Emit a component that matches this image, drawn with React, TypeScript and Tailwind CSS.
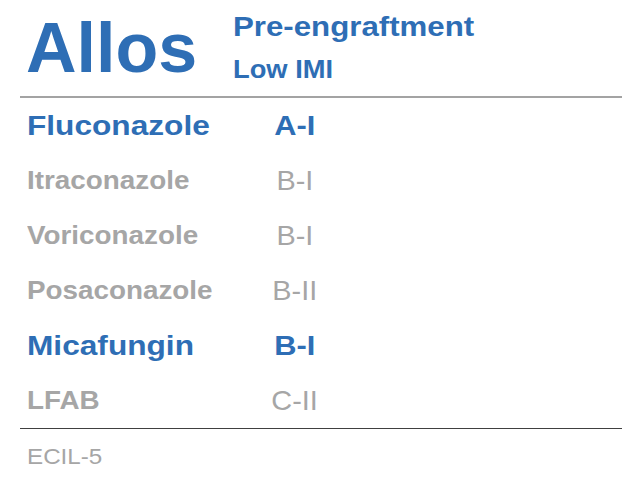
const rows = [
  { name: 'Fluconazole', grade: 'A-I', hl: true },
  { name: 'Itraconazole', grade: 'B-I', hl: false },
  { name: 'Voriconazole', grade: 'B-I', hl: false },
  { name: 'Posaconazole', grade: 'B-II', hl: false },
  { name: 'Micafungin', grade: 'B-I', hl: true },
  { name: 'LFAB', grade: 'C-II', hl: false },
];

export default function App() {
  return (
    <div className="w-[640px] h-[480px] bg-white overflow-hidden font-['Liberation_Sans',Arial,sans-serif]">
      <div className="h-[96px] flex items-start pt-[10px] pl-[26px]">
        <div className="mt-[3px] text-[70px] leading-[70px] font-bold text-[#2e6eb5] w-[207px]">Allos</div>
        <div className="font-bold text-[#2e6eb5]">
          <div className="text-[28px] leading-[34px]">
            <span className="inline-block origin-left scale-x-[1.115]">Pre-engraftment</span>
          </div>
          <div className="mt-[8px] text-[26px] leading-[34px]">
            <span className="inline-block origin-left scale-x-[1.05]">Low IMI</span>
          </div>
        </div>
      </div>
      <div className="ml-[20px] mr-[18px] h-[2px] bg-[#a3a3a3]" />

      <div className="pl-[27px]">
        {rows.map((r) => (
          <div key={r.name} className="flex h-[55px] items-center leading-none">
            <div className="w-[228px] flex">
              <span
                className={
                  r.hl
                    ? 'block origin-left scale-x-[1.13] text-[28px] leading-none font-bold text-[#2e6eb5]'
                    : 'block origin-left scale-x-[1.05] text-[26.5px] leading-none font-bold text-[#a6a6a6]'
                }
              >
                {r.name}
              </span>
            </div>
            <div className="w-[80px] flex justify-center">
              <span
                className={
                  r.hl
                    ? 'block scale-x-[1.1] text-[28px] leading-none font-bold text-[#2e6eb5]'
                    : 'block scale-x-[1.03] text-[28px] leading-none text-[#a6a6a6]'
                }
              >
                {r.grade}
              </span>
            </div>
          </div>
        ))}
      </div>

      <div className="ml-[20px] mr-[18px] h-[1px] bg-[#404040]" />
      <div className="pl-[27px] text-[22px] leading-[56px] text-[#a6a6a6]">
        <span className="inline-block origin-left scale-x-[1.1]">ECIL-5</span>
      </div>
    </div>
  );
}
